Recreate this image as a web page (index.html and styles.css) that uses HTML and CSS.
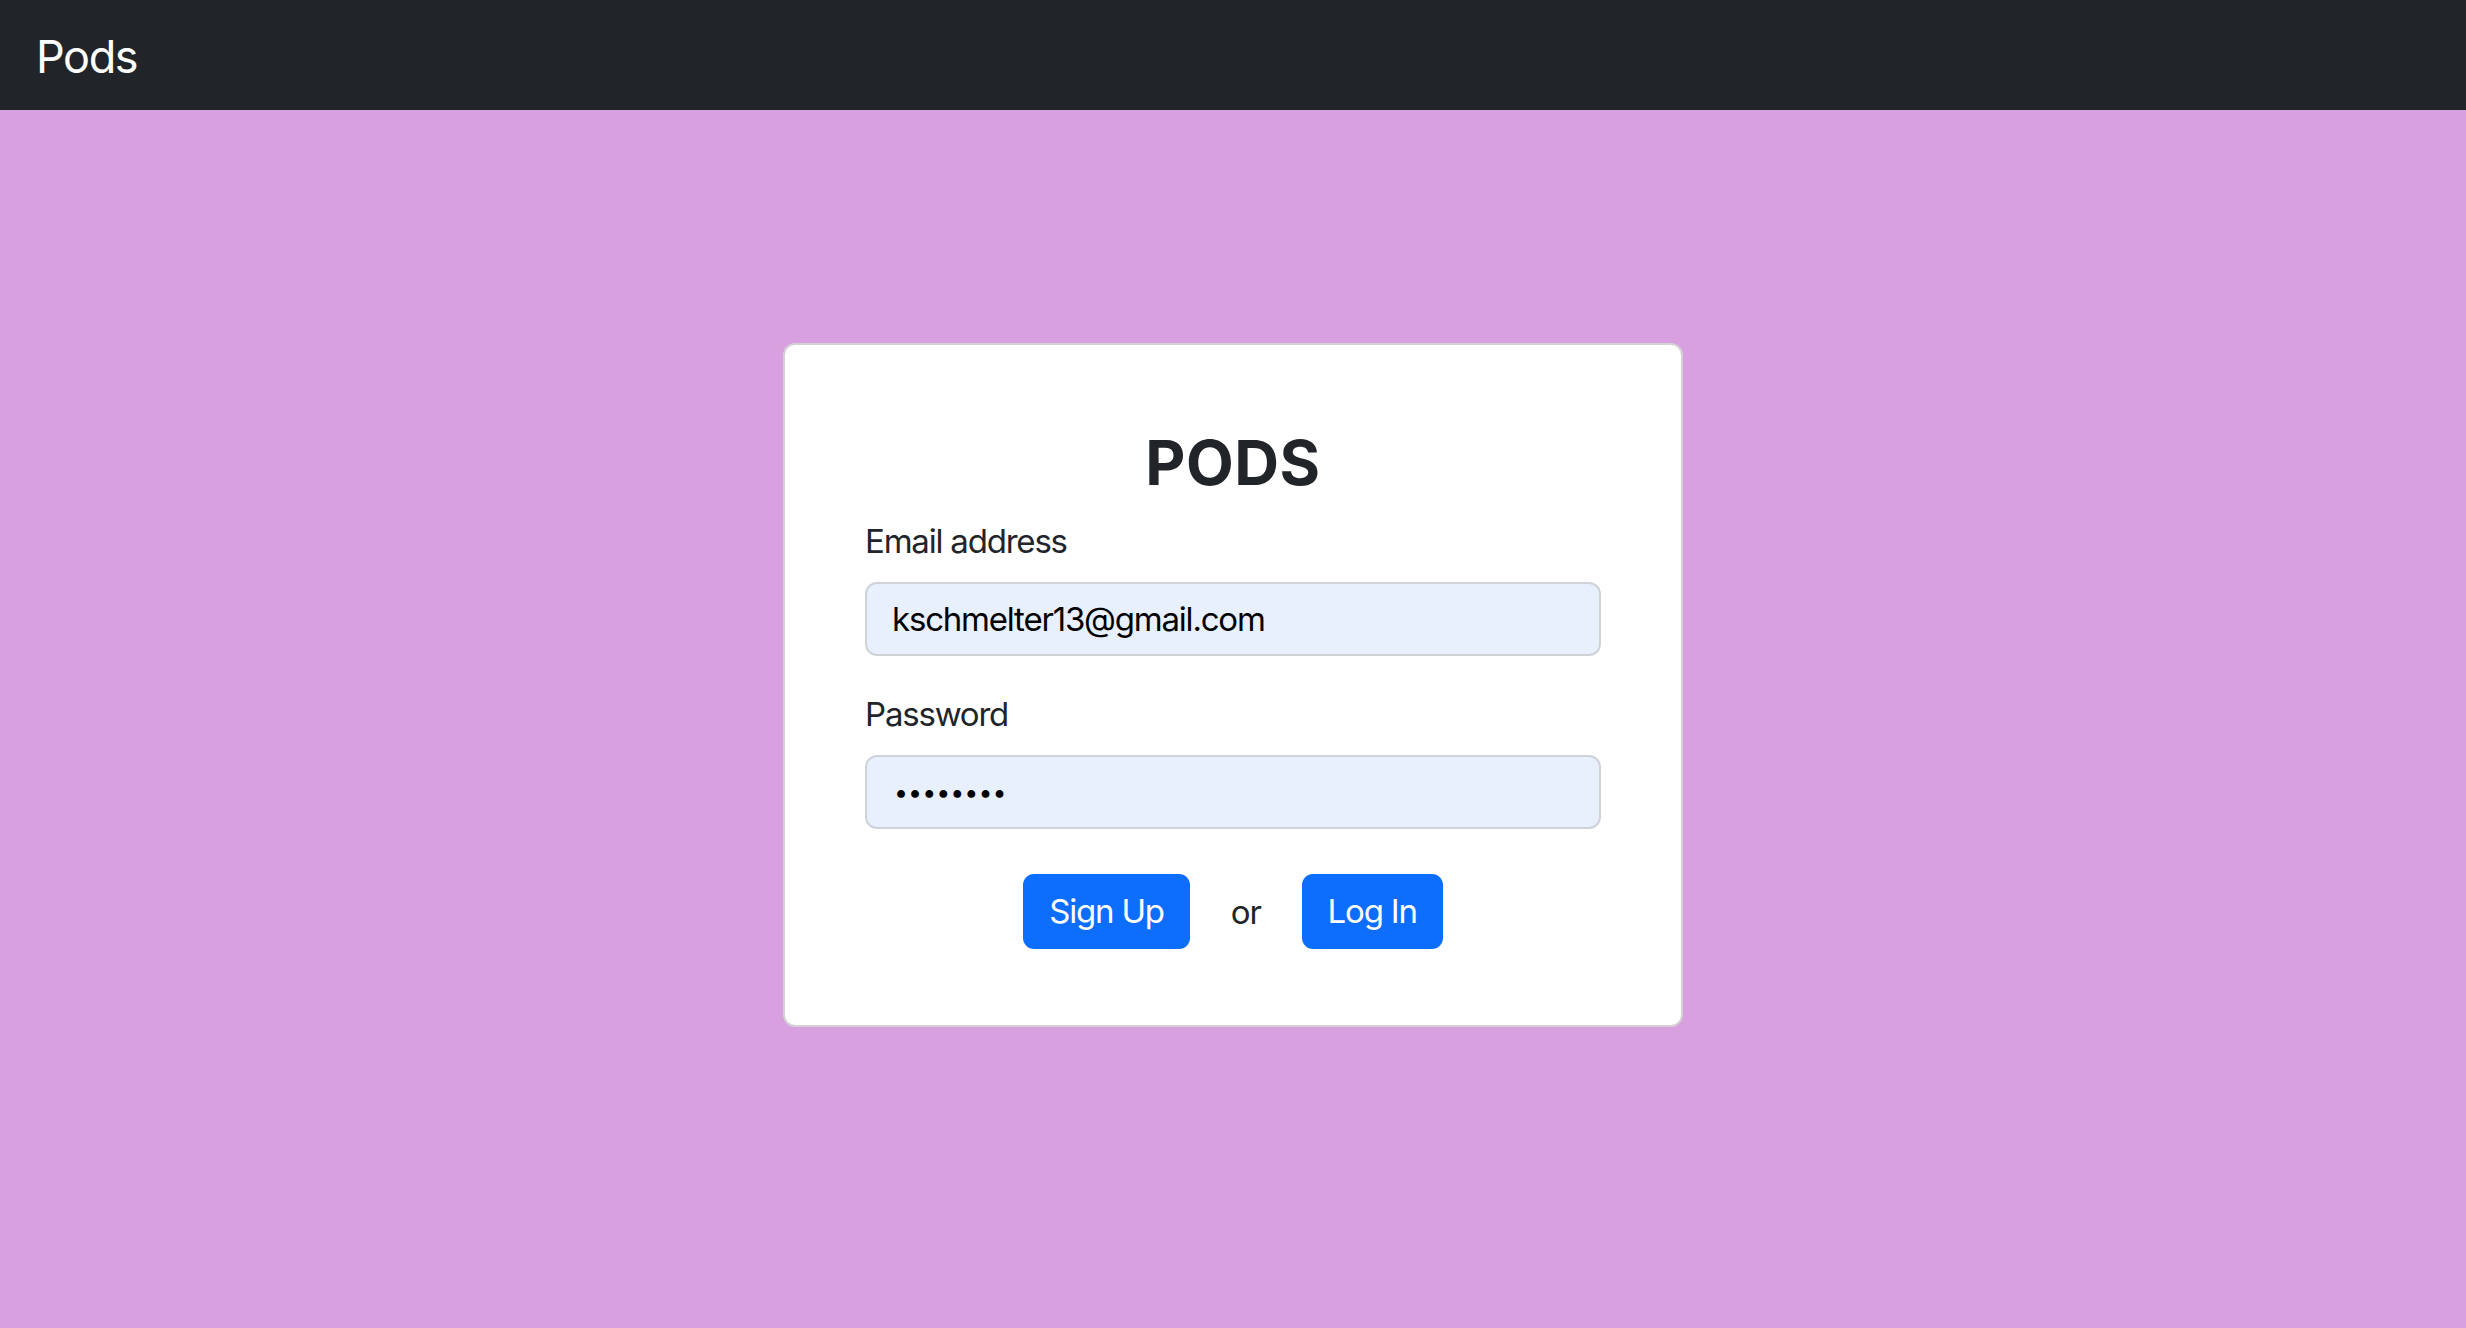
FILE: index.html
```html
<!DOCTYPE html>
<html lang="en">
<head>
<meta charset="utf-8">
<title>Pods</title>
<link rel="stylesheet" href="styles.css">
</head>
<body>
<nav class="navbar">
  <a class="brand" href="#">Pods</a>
</nav>
<main class="page">
  <form class="card">
    <h1 class="title">PODS</h1>
    <div class="field">
      <label class="label" for="email">Email address</label>
      <input class="input" id="email" type="email" value="kschmelter13@gmail.com">
    </div>
    <div class="field">
      <label class="label" for="password">Password</label>
      <input class="input input-password" id="password" type="password" value="12345678">
    </div>
    <div class="actions">
      <button class="btn" type="button">Sign Up</button>
      <span class="or">or</span>
      <button class="btn" type="button">Log In</button>
    </div>
  </form>
</main>
</body>
</html>
```
FILE: styles.css
```css
* { box-sizing: border-box; }
html, body {
  margin: 0;
  padding: 0;
  height: 100%;
}
body {
  background: #d8a0df;
  font-family: Inter, "Noto Sans", "Liberation Sans", sans-serif;
  color: #212529;
  letter-spacing: -1.2px;
}
.navbar {
  height: 110px;
  background: #212529;
  display: flex;
  align-items: center;
  padding: 0 36px;
}
.brand {
  color: #ffffff;
  text-decoration: none;
  font-size: 45px;
  font-weight: 400;
  line-height: 1;
  margin-top: 2px;
  letter-spacing: -1.4px;
}
.page {
  padding-top: 233px;
}
.card {
  width: 900px;
  margin: 0 auto;
  background: #ffffff;
  border: 2px solid #d4d0d6;
  border-radius: 12px;
  padding: 81px 80px 76px;
  display: flex;
  flex-direction: column;
}
.title {
  margin: 0 0 16px;
  text-align: center;
  font-size: 62px;
  font-weight: 700;
  line-height: 74px;
  color: #212529;
  letter-spacing: 0.5px;
}
.field {
  display: flex;
  flex-direction: column;
  margin-bottom: 33px;
}
.field + .field {
  margin-bottom: 45px;
}
.label {
  font-size: 33px;
  line-height: 50px;
  margin-bottom: 16px;
  color: #212529;
}
.input {
  height: 74px;
  width: 100%;
  border: 2px solid #cfd3d8;
  border-radius: 12px;
  background: #e8f0fe;
  padding: 0 25px;
  font-family: Inter, "Noto Sans", "Liberation Sans", sans-serif;
  font-size: 33px;
  letter-spacing: -1.2px;
  color: #000000;
  outline: none;
}
.input-password {
  font-size: 25px;
  letter-spacing: 0;
  padding-left: 27px;
}
.actions {
  display: flex;
  justify-content: center;
  align-items: center;
  gap: 41px;
}
.btn {
  height: 75px;
  padding: 0 26px;
  border: none;
  border-radius: 11px;
  background: #0d6efd;
  color: #ffffff;
  font-family: Inter, "Noto Sans", "Liberation Sans", sans-serif;
  font-size: 33px;
  letter-spacing: -1.2px;
  line-height: 1;
  cursor: pointer;
}
.or {
  font-size: 33px;
  color: #212529;
}
```
